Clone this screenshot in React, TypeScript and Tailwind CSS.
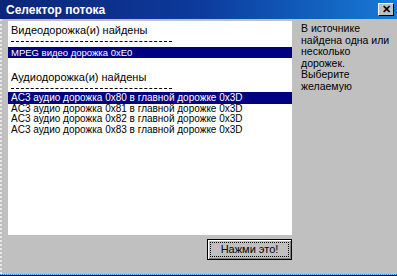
// StreamSelector — old-style Win9x dialog: list of found streams + hint text + default button.

const FONT = "font-['Liberation_Sans',Arial,sans-serif]";

const audioTracks = ['0x80', '0x81', '0x82', '0x83'];

function Dashes() {
  return <div className="mt-[5px] mb-[5px] ml-[3px] w-[161px] border-t border-dashed border-black" />;
}

export default function App() {
  return (
    <div className={`${FONT} flex h-[276px] w-[397px] flex-col overflow-hidden bg-[#c0c0c0] text-black`}>
      {/* title bar */}
      <div className="flex h-[19px] shrink-0 items-center justify-between bg-gradient-to-r from-[#0a2678] via-[#0d3a9c] to-[#1a7ad6] pl-[6px] pr-[3px]">
        <span className="text-[12px] font-bold leading-none text-white">Селектор потока</span>
        <button
          type="button"
          className="flex h-[13px] w-[16px] items-center justify-center border border-t-white border-l-white border-r-black border-b-black bg-[#c0c0c0] text-[11px] font-bold leading-none"
        >
          ✕
        </button>
      </div>

      <div className="flex flex-1 border-l-2 border-dotted border-l-[#e8e8e8]">
        <div className="flex w-[290px] flex-col pl-[6px] pt-[2px]">
          {/* list */}
          <div className="h-[214px] w-[284px] overflow-hidden bg-white pt-[1px] text-[10px] leading-[11px]">
            <div className="pl-[3px] pt-[2px] text-[11px] leading-[12px]">Видеодорожка(и) найдены</div>
            <Dashes />
            <div className="bg-[#000080] pl-[3px] leading-[11px] whitespace-nowrap text-white text-[9.5px]">
              MPEG видео дорожка 0xE0
            </div>
            <div className="mt-[13px] pl-[3px] text-[11px] leading-[12px]">Аудиодорожка(и) найдены</div>
            <div className="mt-[5px] mb-[3px] ml-[3px] w-[161px] border-t border-dashed border-black" />
            {audioTracks.map((id, i) => (
              <div
                key={id}
                className={`pl-[3px] whitespace-nowrap text-[10px] leading-[10.5px] ${i === 0 ? 'bg-[#000080] py-[0.5px] text-white' : ''}`}
              >
                AC3 аудио дорожка {id} в главной дорожке 0x3D
              </div>
            ))}
          </div>

          {/* default button */}
          <div className="flex justify-end pt-[4px]">
            <button
              type="button"
              className="flex h-[21px] w-[85px] items-center justify-center border border-black bg-[#c0c0c0] p-[2px] shadow-[inset_1px_1px_0_#fff,inset_-1px_-1px_0_#808080]"
            >
              <span className="flex h-full w-full items-center justify-center border border-dotted border-black text-[11px] leading-none">
                Нажми это!
              </span>
            </button>
          </div>
        </div>

        {/* hint */}
        <div className="w-[100px] pl-[9px] pt-[4px] text-[10.5px] leading-[11.6px]">
          В источнике найдена одна или несколько дорожек. Выберите желаемую
        </div>
      </div>

      <div className="h-px shrink-0 border-t border-dotted border-[#1e88e5]" />
      <div className="h-px shrink-0 bg-black" />
    </div>
  );
}
